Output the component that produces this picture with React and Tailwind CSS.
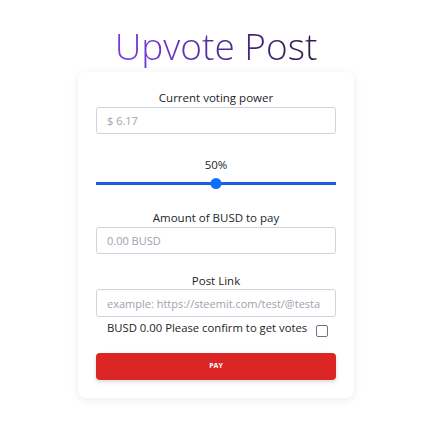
import React, { useState } from 'react';

export default function App() {
  const [power, setPower] = useState(50);
  const [confirmed, setConfirmed] = useState(false);

  return (
    <div
      className="min-h-[436px] w-[432px] bg-white flex flex-col items-center"
      style={{ fontFamily: '"Open Sans", "Noto Sans", sans-serif' }}
    >
      <h1 className="mt-[24px] text-[37px] leading-[44px] font-light bg-gradient-to-r from-[#7c3aed] to-[#2e1a47] bg-clip-text text-transparent">
        Upvote Post
      </h1>

      <div className="mt-[4px] w-[276px] rounded-lg bg-white shadow-[0_2px_10px_rgba(0,0,0,0.08)] px-[18px] pt-[18px] pb-[18px]">
        <p className="text-center text-[11.5px] leading-[15px] text-[#212529]">Current voting power</p>
        <input
          readOnly
          placeholder="$ 6.17"
          className="mt-[2px] w-full h-[27px] rounded-[3px] border border-[#ced4da] px-[10px] text-[11px] placeholder:text-[#9ca3af] outline-none"
        />

        <p className="mt-[23px] text-center text-[11.5px] leading-[15px] text-[#212529]">{power}%</p>
        <div className="relative mt-[6px] h-[11px]">
          <div className="absolute left-0 right-0 top-[4px] h-[3px] bg-[#1a5fe0]" />
          <div
            className="absolute top-0 h-[11px] w-[11px] rounded-full bg-[#0d6efd] -translate-x-1/2"
            style={{ left: `${power}%` }}
          />
        </div>

        <p className="mt-[21px] text-center text-[11.5px] leading-[15px] text-[#212529]">Amount of BUSD to pay</p>
        <input
          readOnly
          placeholder="0.00 BUSD"
          className="mt-[2px] w-full h-[27px] rounded-[3px] border border-[#ced4da] px-[10px] text-[11px] placeholder:text-[#9ca3af] outline-none"
        />

        <p className="mt-[19px] text-center text-[11.5px] leading-[15px] text-[#212529]">Post Link</p>
        <input
          placeholder="example: https://steemit.com/test/@testa"
          className="mt-[1px] w-full h-[28px] rounded-[3px] border border-[#ced4da] px-[10px] text-[11px] placeholder:text-[#9ca3af] outline-none"
        />

        <div className="mt-[2px] flex items-start pl-[11px] gap-[9px]">
          <span className="text-[11.3px] leading-[18px] text-[#212529]">BUSD 0.00 Please confirm to get votes</span>
          <button
            onClick={() => setConfirmed(!confirmed)}
            className="mt-[6px] h-[12px] w-[12px] rounded-[2px] border border-[#6b7280] bg-white"
          />
        </div>

        <button className="mt-[16px] w-full h-[27px] rounded-[4px] bg-[#dc2626] text-white text-[7px] font-bold shadow-[0_2px_4px_rgba(0,0,0,0.15)]">
          PAY
        </button>
      </div>
    </div>
  );
}
